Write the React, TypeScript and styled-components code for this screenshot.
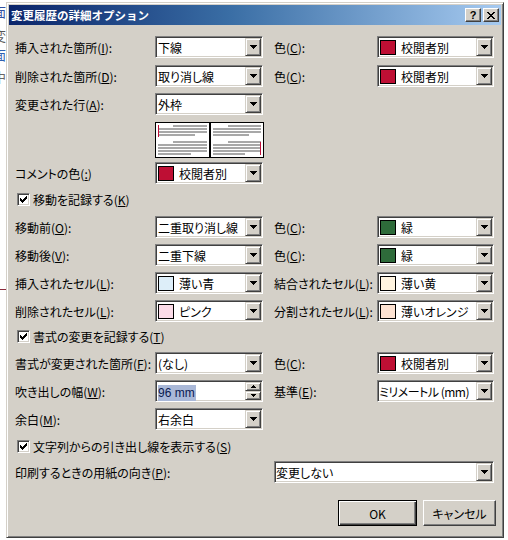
import React from 'react';
import styled, { createGlobalStyle, css } from 'styled-components';

const FONT = `"Noto Sans CJK JP", "Noto Sans", sans-serif`;

const Global = createGlobalStyle`
  html, body { margin: 0; padding: 0; background: #fff; }
  body { font-family: ${FONT}; font-size: 12px; }
  * { box-sizing: border-box; }
`;

const Screen = styled.div`
  width: 508px;
  height: 540px;
  display: flex;
  align-items: flex-start;
  overflow: hidden;
  background: #fff;
`;

const BackStrip = styled.div`
  width: 6px;
  height: 540px;
  flex: none;
  overflow: hidden;
  display: flex;
  flex-direction: column;
  background: #fff;
`;

const Frag = styled.div<{ $mt: number; $c: string }>`
  margin-top: ${p => p.$mt}px;
  margin-left: -7px;
  font-size: 13px;
  line-height: 14px;
  color: ${p => p.$c};
  white-space: nowrap;
`;

const RedTick = styled.div<{ $mt: number }>`
  margin-top: ${p => p.$mt}px;
  width: 6px;
  height: 1px;
  background: #8a2a3a;
`;

const Window = styled.div`
  margin-top: 2px;
  width: 498px;
  height: 536px;
  flex: none;
  background: #d4d0c8;
  border: 1px solid;
  border-color: #d4d0c8 #404040 #404040 #d4d0c8;
  box-shadow: inset 1px 1px 0 #fff, inset -1px -1px 0 #808080;
  padding: 2px;
  display: flex;
  flex-direction: column;
`;

const TitleBar = styled.div`
  height: 20px;
  flex: none;
  background: linear-gradient(to right, #0a246a 0%, #3a6ea5 45%, #a6caf0 100%);
  display: flex;
  align-items: center;
  padding: 0 2px 0 2px;
`;

const TitleText = styled.div`
  flex: 1;
  color: #fff;
  font-weight: bold;
  font-size: 11.5px;
  white-space: nowrap;
`;

const TitleButton = styled.div<{ $gap?: number }>`
  width: 16px;
  height: 14px;
  margin-left: ${p => p.$gap ?? 0}px;
  background: #d4d0c8;
  border: 1px solid;
  border-color: #fff #404040 #404040 #fff;
  box-shadow: inset -1px -1px 0 #808080;
  display: flex;
  align-items: center;
  justify-content: center;
  font-family: "Liberation Sans", Arial, sans-serif;
  font-weight: bold;
  font-size: 11px;
  line-height: 1;
  color: #000;
`;

const Body = styled.div`
  flex: 1;
  display: flex;
  flex-direction: column;
  padding: 11px 5px 0 6px;
`;

const Row = styled.div<{ $mt: number; $h?: number }>`
  display: grid;
  grid-template-columns: 140px 108px 11px 103px 117px;
  align-items: center;
  height: ${p => p.$h ?? 22}px;
  margin-top: ${p => p.$mt}px;
  flex: none;
`;

const Label = styled.span<{ $col?: string }>`
  grid-column: ${p => p.$col ?? 'auto'};
  white-space: nowrap;
  font-size: 12px;
  color: #000;
  font-feature-settings: "palt";
`;

const Field = styled.div<{ $col?: string }>`
  grid-column: ${p => p.$col ?? 'auto'};
  height: 22px;
  background: #fff;
  border: 1px solid;
  border-color: #808080 #fff #fff #808080;
  box-shadow: inset 1px 1px 0 #404040, inset -1px -1px 0 #d4d0c8;
  display: flex;
  align-items: center;
  padding: 1px;
`;

const Value = styled.span<{ $pl?: number; $tight?: boolean }>`
  flex: 1;
  min-width: 0;
  padding-left: ${p => p.$pl ?? 1}px;
  font-size: 12px;
  white-space: pre;
  color: #000;
  font-feature-settings: "palt";
  letter-spacing: ${p => (p.$tight ? '-0.5px' : '0')};
`;

const Selected = styled.span`
  background: #a9b8d8;
  color: #0a1a50;
  padding: 1px 1px 1px 0;
  font-family: "Liberation Sans", Arial, sans-serif;
`;

const Swatch = styled.span<{ $c: string }>`
  width: 16px;
  height: 15px;
  flex: none;
  margin-left: 1px;
  border: 1px solid #000;
  background: ${p => p.$c};
`;

const RaisedBox = styled.div<{ $h: number }>`
  width: 16px;
  height: ${p => p.$h}px;
  flex: none;
  background: #d4d0c8;
  border: 1px solid;
  border-color: #d4d0c8 #404040 #404040 #d4d0c8;
  box-shadow: inset 1px 1px 0 #fff, inset -1px -1px 0 #808080;
  display: flex;
  align-items: center;
  justify-content: center;
`;

const SpinStack = styled.div`
  display: flex;
  flex-direction: column;
  flex: none;
`;

const Preview = styled.div`
  grid-column: 2;
  width: 109px;
  height: 36px;
`;

const CheckRow = styled.div<{ $mt: number }>`
  display: flex;
  align-items: center;
  gap: 3px;
  height: 15px;
  margin-top: ${p => p.$mt}px;
  margin-left: 2px;
  flex: none;
`;

const CheckBox = styled.span`
  width: 13px;
  height: 13px;
  flex: none;
  background: #fff;
  border: 1px solid;
  border-color: #808080 #fff #fff #808080;
  box-shadow: inset 1px 1px 0 #404040, inset -1px -1px 0 #d4d0c8;
  display: flex;
  align-items: center;
  justify-content: center;
`;

const Footer = styled.div`
  display: flex;
  justify-content: flex-end;
  gap: 6px;
  margin-top: 17px;
  flex: none;
`;

const PushButton = styled.button<{ $w: number; $default?: boolean }>`
  width: ${p => p.$w}px;
  height: 26px;
  padding: 0;
  background: #d4d0c8;
  font-family: ${FONT};
  font-size: 12px;
  color: #000;
  font-feature-settings: "palt";
  border: 1px solid;
  border-color: #fff #404040 #404040 #fff;
  box-shadow: inset -1px -1px 0 #808080;
  ${p =>
    p.$default &&
    css`
      border-color: #000;
      box-shadow: inset 1px 1px 0 #fff, inset -1px -1px 0 #404040, inset -2px -2px 0 #808080;
    `}
`;

const Arrow = ({ up = false }: { up?: boolean }) => (
  <svg width="7" height="4" viewBox="0 0 7 4" shapeRendering="crispEdges">
    {[0, 1, 2, 3].map(i => (
      <rect key={i} x={i} y={up ? 3 - i : i} width={7 - i * 2} height={1} fill="#000" />
    ))}
  </svg>
);

const SmallArrow = ({ up = false }: { up?: boolean }) => (
  <svg width="5" height="3" viewBox="0 0 5 3" shapeRendering="crispEdges">
    {[0, 1, 2].map(i => (
      <rect key={i} x={i} y={up ? 2 - i : i} width={5 - i * 2} height={1} fill="#000" />
    ))}
  </svg>
);

const PixelArt = ({ rows }: { rows: string[] }) => (
  <svg width={rows[0].length} height={rows.length} viewBox={`0 0 ${rows[0].length} ${rows.length}`} shapeRendering="crispEdges">
    {rows.flatMap((r, y) =>
      r.split('').map((ch, x) => (ch === '#' ? <rect key={`${x}-${y}`} x={x} y={y} width={1} height={1} fill="#000" /> : null))
    )}
  </svg>
);

const CHECK = ['......#', '.....##', '#...###', '##.###.', '#####..', '.###...', '..#....'];
const CLOSE = ['##....##', '.##..##.', '..####..', '...##...', '..####..', '.##..##.', '##....##'];

const PreviewArt = () => {
  const gray = '#a8a8a8';
  const para = (ox: number, w: number) => {
    const lines: [number, number, number][] = [
      [3, 17, w - 19],
      [6, 2, w - 4],
      [9, 2, w - 4],
      [12, 2, w - 16],
      [19, 17, w - 19],
      [22, 2, w - 4],
      [25, 2, w - 4],
      [28, 2, w - 4],
      [31, 2, w - 20],
    ];
    return lines.map(([y, x, lw], i) => <rect key={`${ox}-${i}`} x={ox + x} y={y} width={lw} height={2} fill={gray} />);
  };
  return (
    <svg width="109" height="36" viewBox="0 0 109 36" shapeRendering="crispEdges">
      <rect x="0" y="0" width="109" height="36" fill="#000" />
      <rect x="1" y="1" width="53" height="34" fill="#fff" />
      <rect x="56" y="1" width="52" height="34" fill="#fff" />
      {para(1, 53)}
      {para(56, 52)}
      <rect x="3" y="3" width="1" height="12" fill="#c0103a" />
      <rect x="105" y="20" width="1" height="13" fill="#c0103a" />
    </svg>
  );
};

const RED = '#be0f34';
const GREEN = '#2e6b3a';

type ComboProps = { value: React.ReactNode; swatch?: string; col?: string; pl?: number; tight?: boolean };
const Combo = ({ value, swatch, col, pl, tight }: ComboProps) => (
  <Field $col={col}>
    {swatch && <Swatch $c={swatch} />}
    <Value $pl={pl ?? (swatch ? 5 : 1)} $tight={tight}>
      {value}
    </Value>
    <RaisedBox $h={18}>
      <Arrow />
    </RaisedBox>
  </Field>
);

export default function App() {
  return (
    <>
      <Global />
      <Screen>
        <BackStrip>
          <Frag $mt={5} $c="#3050a0">面</Frag>
          <Frag $mt={10} $c="#555">変</Frag>
          <Frag $mt={5} $c="#3060b0">面</Frag>
          <Frag $mt={8} $c="#666">中</Frag>
          <RedTick $mt={205} />
        </BackStrip>
        <Window>
          <TitleBar>
            <TitleText>変更履歴の詳細オプション</TitleText>
            <TitleButton>?</TitleButton>
            <TitleButton $gap={2}>
              <PixelArt rows={CLOSE} />
            </TitleButton>
          </TitleBar>
          <Body>
            <Row $mt={0}>
              <Label>挿入された箇所(<u>I</u>):</Label>
              <Combo value="下線" />
              <span />
              <Label>色(<u>C</u>):</Label>
              <Combo value="校閲者別" swatch={RED} />
            </Row>
            <Row $mt={7}>
              <Label>削除された箇所(<u>D</u>):</Label>
              <Combo value="取り消し線" />
              <span />
              <Label>色(<u>C</u>):</Label>
              <Combo value="校閲者別" swatch={RED} />
            </Row>
            <Row $mt={6}>
              <Label>変更された行(<u>A</u>):</Label>
              <Combo value="外枠" />
            </Row>
            <Row $mt={7} $h={36}>
              <Preview>
                <PreviewArt />
              </Preview>
            </Row>
            <Row $mt={4}>
              <Label>コメントの色(<u>:</u>)</Label>
              <Combo value="校閲者別" swatch={RED} />
            </Row>
            <CheckRow $mt={8}>
              <CheckBox>
                <PixelArt rows={CHECK} />
              </CheckBox>
              <Label>移動を記録する(<u>K</u>)</Label>
            </CheckRow>
            <Row $mt={9}>
              <Label>移動前(<u>O</u>):</Label>
              <Combo value="二重取り消し線" />
              <span />
              <Label>色(<u>C</u>):</Label>
              <Combo value="緑" swatch={GREEN} />
            </Row>
            <Row $mt={6}>
              <Label>移動後(<u>V</u>):</Label>
              <Combo value="二重下線" />
              <span />
              <Label>色(<u>C</u>):</Label>
              <Combo value="緑" swatch={GREEN} />
            </Row>
            <Row $mt={6}>
              <Label>挿入されたセル(<u>L</u>):</Label>
              <Combo value="薄い青" swatch="#ddeef9" />
              <span />
              <Label>結合されたセル(<u>L</u>):</Label>
              <Combo value="薄い黄" swatch="#fff4e0" />
            </Row>
            <Row $mt={6}>
              <Label>削除されたセル(<u>L</u>):</Label>
              <Combo value="ピンク" swatch="#fbdbe8" />
              <span />
              <Label>分割されたセル(<u>L</u>):</Label>
              <Combo value="薄いオレンジ" swatch="#fde3d3" />
            </Row>
            <CheckRow $mt={7}>
              <CheckBox>
                <PixelArt rows={CHECK} />
              </CheckBox>
              <Label>書式の変更を記録する(<u>T</u>)</Label>
            </CheckRow>
            <Row $mt={8}>
              <Label>書式が変更された箇所(<u>F</u>):</Label>
              <Combo value="(なし)" />
              <span />
              <Label>色(<u>C</u>):</Label>
              <Combo value="校閲者別" swatch={RED} />
            </Row>
            <Row $mt={6}>
              <Label>吹き出しの幅(<u>W</u>):</Label>
              <Field>
                <Value>
                  <Selected>96 mm</Selected>
                </Value>
                <SpinStack>
                  <RaisedBox $h={9}>
                    <SmallArrow up />
                  </RaisedBox>
                  <RaisedBox $h={9}>
                    <SmallArrow />
                  </RaisedBox>
                </SpinStack>
              </Field>
              <span />
              <Label>基準(<u>E</u>):</Label>
              <Combo value="ミリメートル (mm)" pl={0} tight />
            </Row>
            <Row $mt={6}>
              <Label>余白(<u>M</u>):</Label>
              <Combo value="右余白" />
            </Row>
            <CheckRow $mt={9}>
              <CheckBox>
                <PixelArt rows={CHECK} />
              </CheckBox>
              <Label>文字列からの引き出し線を表示する(<u>S</u>)</Label>
            </CheckRow>
            <Row $mt={7}>
              <Label $col="1 / 4">印刷するときの用紙の向き(<u>P</u>):</Label>
              <Combo value="変更しない" col="4 / 6" pl={0} />
            </Row>
            <Footer>
              <PushButton $w={79} $default>
                OK
              </PushButton>
              <PushButton $w={73}>キャンセル</PushButton>
            </Footer>
          </Body>
        </Window>
      </Screen>
    </>
  );
}
